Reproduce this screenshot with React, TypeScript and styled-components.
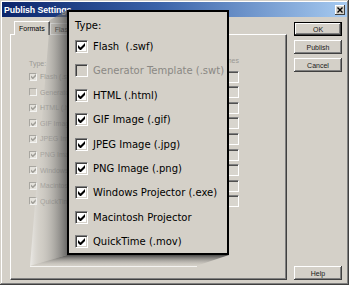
import React from 'react'
import styled, { createGlobalStyle } from 'styled-components'

const GlobalStyle = createGlobalStyle`
  html, body { margin: 0; padding: 0; background: #fff; }
  body { font-family: "Liberation Sans", Arial, sans-serif; }
`

const formats = [
  { label: 'Flash  (.swf)', small: 'Flash (.swf)', checked: true },
  { label: 'Generator Template (.swt)', small: 'Generator Template', checked: false, disabled: true },
  { label: 'HTML (.html)', small: 'HTML (.html)', checked: true },
  { label: 'GIF Image (.gif)', small: 'GIF Image (.gif)', checked: true },
  { label: 'JPEG Image (.jpg)', small: 'JPEG Image (.jpg)', checked: true },
  { label: 'PNG Image (.png)', small: 'PNG Image (.png)', checked: true },
  { label: 'Windows Projector (.exe)', small: 'Windows Projector', checked: true },
  { label: 'Macintosh Projector', small: 'Macintosh Projector', checked: true },
  { label: 'QuickTime (.mov)', small: 'QuickTime (.mov)', checked: true },
]

const Screen = styled.div`
  position: relative;
  width: 353px;
  height: 288px;
  overflow: hidden;
`

const Dialog = styled.div`
  box-sizing: border-box;
  width: 349px;
  height: 285px;
  padding: 2px;
  background: #d4d0c8;
  box-shadow: inset -1px -1px #404040, inset 1px 1px #d4d0c8,
    inset -2px -2px #808080, inset 2px 2px #fff;
  display: flex;
  flex-direction: column;
`

const TitleBar = styled.div`
  height: 15px;
  flex: none;
  padding: 0 2px;
  display: flex;
  align-items: center;
  justify-content: space-between;
  background: linear-gradient(to right, #0a246a 0%, #3a62a8 45%, #a6caf0 100%);
`

const Title = styled.span`
  color: #fff;
  font-weight: bold;
  font-size: 8.8px;
  letter-spacing: -0.1px;
`

const CloseButton = styled.span`
  box-sizing: border-box;
  width: 10px;
  height: 10px;
  display: flex;
  align-items: center;
  justify-content: center;
  background: #d4d0c8;
  box-shadow: inset -1px -1px #404040, inset 1px 1px #fff;
`

const Body = styled.div`
  flex: 1;
  display: flex;
  gap: 7px;
  padding: 4px 5px 3px 8px;
`

const TabArea = styled.div`
  width: 277px;
  display: flex;
  flex-direction: column;
`

const TabsRow = styled.div`
  height: 13px;
  padding-left: 4px;
  display: flex;
  align-items: flex-end;
  position: relative;
  z-index: 1;
`

const Tab = styled.div<{ $active?: boolean }>`
  box-sizing: border-box;
  height: ${p => (p.$active ? 14 : 11)}px;
  margin-bottom: ${p => (p.$active ? -1 : 0)}px;
  padding: 0 4px;
  display: flex;
  align-items: center;
  font-size: 7px;
  color: #000;
  background: #d4d0c8;
  border-top: 1px solid #fff;
  border-left: 1px solid #fff;
  border-right: 1px solid #404040;
  box-shadow: inset -1px 0 #808080;
`

const Panel = styled.div`
  flex: 1;
  box-sizing: border-box;
  border: 1px solid;
  border-color: #fff #404040 #404040 #fff;
  box-shadow: inset -1px -1px #808080;
  padding: 18px 0 0 18px;
`

const FileGrid = styled.div`
  display: grid;
  grid-template-columns: 121px 89px;
  grid-template-rows: 14px repeat(9, 12px);
  row-gap: 3.6px;
`

const SmallLabel = styled.span<{ $align: 'start' | 'end' }>`
  font-size: 7px;
  color: #9a9894;
  justify-self: ${p => p.$align};
  align-self: ${p => (p.$align === 'start' ? 'end' : 'center')};
`

const SmallRow = styled.div`
  display: flex;
  align-items: center;
  gap: 3px;
  font-size: 7px;
  color: #9a9894;
  white-space: nowrap;
`

const FileBox = styled.div`
  box-sizing: border-box;
  height: 12px;
  background: #d8d5ce;
  border: 1px solid;
  border-color: #808080 #fff #fff #808080;
  box-shadow: inset 1px 1px #505050;
`

const Buttons = styled.div`
  width: 48px;
  padding-top: 1px;
  display: flex;
  flex-direction: column;
  gap: 4px;
`

const Button = styled.div<{ $default?: boolean; $bottom?: boolean }>`
  box-sizing: border-box;
  height: 14px;
  margin-top: ${p => (p.$bottom ? 'auto' : '0')};
  display: flex;
  align-items: center;
  justify-content: center;
  font-size: 7px;
  color: #1a1a1a;
  background: #d4d0c8;
  border: ${p => (p.$default ? '1px solid #000' : 'none')};
  box-shadow: inset -1px -1px #404040, inset 1px 1px #fff,
    inset -2px -2px #808080;
`

const Shade = styled.svg`
  position: absolute;
  left: 0;
  top: 0;
  z-index: 2;
  pointer-events: none;
`

const Popup = styled.div`
  position: absolute;
  z-index: 3;
  left: 67px;
  top: 10px;
  width: 162px;
  height: 245px;
  box-sizing: border-box;
  border: 2px solid #000;
  background: #d4d0c8;
  padding: 7px 0 0 6px;
  font-family: "DejaVu Sans", Verdana, sans-serif;
  font-size: 10px;
  color: #000;
`

const PopupHeading = styled.div`
  height: 14px;
  line-height: 14px;
`

const PopupList = styled.div`
  margin-top: 7px;
  display: flex;
  flex-direction: column;
  gap: 11.4px;
`

const PopupRow = styled.div<{ $disabled?: boolean }>`
  height: 13px;
  display: flex;
  align-items: center;
  gap: 5px;
  white-space: pre;
  color: ${p => (p.$disabled ? '#8a8884' : '#000')};
`

const Box = styled.span<{ $small?: boolean; $disabled?: boolean }>`
  box-sizing: border-box;
  flex: none;
  width: ${p => (p.$small ? 8 : 13)}px;
  height: ${p => (p.$small ? 8 : 13)}px;
  display: flex;
  align-items: center;
  justify-content: center;
  background: ${p => (p.$disabled ? '#d4d0c8' : p.$small ? '#e4e2dc' : '#fff')};
  border: 1px solid;
  border-color: ${p => (p.$small ? '#a8a6a0 #f4f4f2 #f4f4f2 #a8a6a0' : '#808080 #fff #fff #808080')};
  box-shadow: ${p => (p.$small ? 'none' : 'inset 1px 1px #404040, inset -1px -1px #d4d0c8')};
`

const Check = ({ size, color }: { size: number; color: string }) => (
  <svg width={size} height={size} viewBox="0 0 7 7">
    <polygon points="0,2 2.5,4.5 7,0 7,3 2.5,7.5 0,5" fill={color} />
  </svg>
)

const Checkbox = ({ checked, disabled, small }: { checked: boolean; disabled?: boolean; small?: boolean }) => (
  <Box $small={small} $disabled={disabled}>
    {checked && <Check size={small ? 5 : 7} color={small ? '#a09e98' : '#000'} />}
  </Box>
)

const App = () => {
  return (
    <Screen>
      <GlobalStyle />
      <Dialog>
        <TitleBar>
          <Title>Publish Settings</Title>
          <CloseButton>
            <svg width="6" height="6" viewBox="0 0 6 6">
              <path d="M0.5 0.5 L5.5 5.5 M5.5 0.5 L0.5 5.5" stroke="#000" strokeWidth="1.4" />
            </svg>
          </CloseButton>
        </TitleBar>
        <Body>
          <TabArea>
            <TabsRow>
              <Tab $active>Formats</Tab>
              <Tab>Flash</Tab>
            </TabsRow>
            <Panel>
              <FileGrid>
                <SmallLabel $align="start">Type:</SmallLabel>
                <SmallLabel $align="end">File names</SmallLabel>
                {formats.map(f => (
                  <React.Fragment key={f.label}>
                    <SmallRow>
                      <Checkbox small checked={f.checked} disabled={f.disabled} />
                      {f.small}
                    </SmallRow>
                    <FileBox />
                  </React.Fragment>
                ))}
              </FileGrid>
            </Panel>
          </TabArea>
          <Buttons>
            <Button $default>OK</Button>
            <Button>Publish</Button>
            <Button>Cancel</Button>
            <Button $bottom>Help</Button>
          </Buttons>
        </Body>
      </Dialog>

      <Shade width="353" height="288" viewBox="0 0 353 288">
        <defs>
          <linearGradient id="side" x1="30" y1="0" x2="67" y2="0" gradientUnits="userSpaceOnUse">
            <stop offset="0" stopColor="#ffffff" stopOpacity="0.55" />
            <stop offset="0.3" stopColor="#c8c6c0" stopOpacity="0.25" />
            <stop offset="1" stopColor="#505050" stopOpacity="0.8" />
          </linearGradient>
          <linearGradient id="under" x1="0" y1="255" x2="0" y2="266" gradientUnits="userSpaceOnUse">
            <stop offset="0" stopColor="#3a3a3a" stopOpacity="0.9" />
            <stop offset="1" stopColor="#d4d0c8" stopOpacity="0.2" />
          </linearGradient>
        </defs>
        <polygon points="50,20 67,10 67,255 30,266" fill="url(#side)" />
        <polygon points="67,255 229,255 196,266 30,266" fill="url(#under)" />
        <line x1="30" y1="266.5" x2="197" y2="266.5" stroke="#f4f3f0" strokeWidth="1" />
      </Shade>

      <Popup>
        <PopupHeading>Type:</PopupHeading>
        <PopupList>
          {formats.map(f => (
            <PopupRow key={f.label} $disabled={f.disabled}>
              <Checkbox checked={f.checked} disabled={f.disabled} />
              {f.label}
            </PopupRow>
          ))}
        </PopupList>
      </Popup>
    </Screen>
  )
}

export default App
